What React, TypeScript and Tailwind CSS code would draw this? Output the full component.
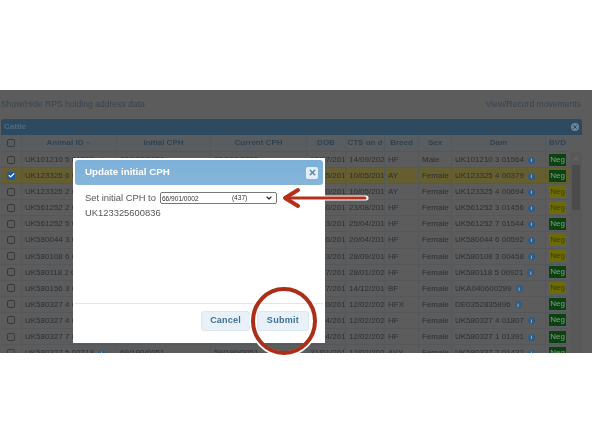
import { Check, ChevronDown, ChevronUp, X } from 'lucide-react';

type Row = {
  id: string;
  initial?: string;
  current?: string;
  dob: string;
  cts: string;
  breed: string;
  sex: string;
  dam: string;
  bvd: 'green' | 'yellow';
  checked?: boolean;
};

const ROWS: Row[] = [
  { id: 'UK101210 5 01562', initial: '60/190/0051', current: '60/190/0051', dob: '15/07/2011', cts: '14/09/2020', breed: 'HF', sex: 'Male', dam: 'UK101210 3 01564', bvd: 'green' },
  { id: 'UK123325 6 00836', dob: '15/05/2011', cts: '10/05/2013', breed: 'AY', sex: 'Female', dam: 'UK123325 4 00379', bvd: 'green', checked: true },
  { id: 'UK123325 2 00837', dob: '20/10/2011', cts: '10/05/2013', breed: 'AY', sex: 'Female', dam: 'UK123325 4 00694', bvd: 'yellow' },
  { id: 'UK561252 2 01772', dob: '10/10/2013', cts: '23/08/2016', breed: 'HF', sex: 'Female', dam: 'UK561252 3 01456', bvd: 'yellow' },
  { id: 'UK561252 5 01775', dob: '15/03/2013', cts: '25/04/2013', breed: 'HF', sex: 'Female', dam: 'UK561252 7 01544', bvd: 'green' },
  { id: 'UK580044 3 00664', dob: '15/06/2014', cts: '20/04/2017', breed: 'HF', sex: 'Female', dam: 'UK580044 6 00592', bvd: 'yellow' },
  { id: 'UK580108 6 00512', dob: '10/03/2014', cts: '28/09/2015', breed: 'HF', sex: 'Female', dam: 'UK580108 3 00458', bvd: 'yellow' },
  { id: 'UK580118 2 00992', dob: '10/07/2016', cts: '28/01/2020', breed: 'HF', sex: 'Female', dam: 'UK580118 5 00921', bvd: 'green' },
  { id: 'UK580156 3 00412', dob: '10/07/2016', cts: '14/12/2018', breed: 'BF', sex: 'Female', dam: 'UKA040600299', bvd: 'yellow' },
  { id: 'UK580327 4 02701', dob: '10/10/2015', cts: '12/02/2020', breed: 'HFX', sex: 'Female', dam: 'DE0352835896', bvd: 'green' },
  { id: 'UK580327 4 02704', dob: '10/04/2017', cts: '12/02/2020', breed: 'HF', sex: 'Female', dam: 'UK580327 4 01807', bvd: 'green' },
  { id: 'UK580327 7 02707', dob: '10/04/2017', cts: '12/02/2020', breed: 'HF', sex: 'Female', dam: 'UK580327 1 01391', bvd: 'green' },
  { id: 'UK580327 5 02718', initial: '69/190/0051', current: '59/190/0051', dob: '31/01/2015', cts: '12/02/2020', breed: 'AYY', sex: 'Female', dam: 'UK580337 7 01432', bvd: 'green' },
];

const COLS = 'grid grid-cols-[21px_95px_94px_96px_39px_39px_34px_33px_94px_23px]';
const CELL = 'overflow-hidden whitespace-nowrap border-r border-[#52585c] pl-[3px] leading-[15px]';

function Info() {
  return (
    <span className="ml-[4px] inline-flex h-[7px] w-[7px] items-center justify-center rounded-full bg-[#2d5c88] align-[0px] text-[6px] leading-none font-bold text-[#a9b9c6]">
      i
    </span>
  );
}

function Box({ checked }: { checked?: boolean }) {
  if (checked) {
    return (
      <div className="flex h-[8px] w-[8px] items-center justify-center rounded-[2px] bg-[#1f5a9e]">
        <Check size={7} strokeWidth={4} className="text-white" />
      </div>
    );
  }
  return <div className="h-[8px] w-[8px] rounded-[2px] border border-[#3a3a3a]" />;
}

function TableRow({ row }: { row: Row }) {
  const rowBg = row.checked ? 'bg-[#645e30]' : 'bg-[#5c5c5c]';
  return (
    <div className={`${COLS} h-[16.1px] border-b border-[#52585c] text-[8px] text-[#2b3035] ${rowBg}`}>
      <div className="flex items-center justify-center border-r border-[#52585c]">
        <Box checked={row.checked} />
      </div>
      <div className={CELL}>
        {row.id}
        <Info />
      </div>
      <div className={CELL}>{row.initial}</div>
      <div className={CELL}>{row.current}</div>
      <div className={CELL}>{row.dob}</div>
      <div className={CELL}>{row.cts}</div>
      <div className={CELL}>{row.breed}</div>
      <div className={CELL}>{row.sex}</div>
      <div className={CELL}>
        {row.dam}
        <Info />
      </div>
      <div className="flex items-center justify-center">
        <span
          className={`h-[12px] w-[17px] text-center text-[8px] leading-[12px] ${
            row.bvd === 'green' ? 'bg-[#0a4212] text-[#86a086]' : 'bg-[#6c6b08] text-[#3c3c0a]'
          }`}
        >
          Neg
        </span>
      </div>
    </div>
  );
}

function Dialog() {
  return (
    <div className="absolute left-[73px] top-[68px] flex h-[185px] w-[252px] flex-col bg-white px-[2px] pt-[2px]">
      <div className="flex h-[25px] items-center justify-between rounded-[3px] bg-gradient-to-b from-[#7db1da] to-[#86b5d9] pl-[10px] pr-[5px]">
        <span className="text-[9.8px] font-bold text-white">Update initial CPH</span>
        <div className="flex h-[12px] w-[12px] items-center justify-center rounded-[2px] bg-[#e4eef6]">
          <X size={9} strokeWidth={4} className="text-[#5d87a8]" />
        </div>
      </div>
      <div className="flex-1 pl-[10px] pt-[6px] text-[9.4px] leading-[14px] text-[#555555]">
        <div className="flex items-center gap-[4px]">
          <span>Set initial CPH to</span>
          <div className="flex h-[12px] w-[117px] items-center rounded-[2px] border border-[#777777] pl-[1px] pr-[3px] text-[6.6px] text-[#333333]">
            <span className="w-[70px] pt-[1px]">66/901/0002</span>
            <span className="flex-1">(437)</span>
            <ChevronDown size={8} strokeWidth={3.5} className="text-[#222222]" />
          </div>
        </div>
        <div className="mt-[1px]">UK123325600836</div>
      </div>
      <div className="flex h-[40px] items-start justify-end gap-[7px] border-t-[1.5px] border-[#dfe6ec] pr-[14px] pt-[7px]">
        <div className="flex h-[20px] w-[49px] items-center justify-center rounded-[3px] border border-[#dce7f0] bg-[#e9f1f8] text-[9px] font-bold tracking-[0.2px] text-[#3f6f91]">
          Cancel
        </div>
        <div className="flex h-[20px] w-[52px] items-center justify-center rounded-[3px] border border-[#dce7f0] bg-[#e9f1f8] text-[9px] font-bold tracking-[0.3px] text-[#3f6f91]">
          Submit
        </div>
      </div>
    </div>
  );
}

function Marks() {
  return (
    <svg className="absolute left-0 top-0" width="592" height="444" viewBox="0 0 592 444" fill="none">
      <path d="M366 198H296" stroke="#ffffff" strokeWidth="5" strokeLinecap="round" />
      <path d="M365 198H288" stroke="#b5301a" strokeWidth="3" strokeLinecap="round" />
      <path d="M298 190L285 198L298 206" stroke="#b5301a" strokeWidth="4" strokeLinecap="round" strokeLinejoin="round" />
      <ellipse cx="284" cy="321" rx="32" ry="33" stroke="#ffffff" strokeWidth="5.5" />
      <ellipse cx="284" cy="321" rx="31" ry="32" stroke="#ab2e18" strokeWidth="4" />
    </svg>
  );
}

export default function App() {
  return (
    <div className="relative h-[444px] w-[592px] overflow-hidden bg-white font-['Liberation_Sans',Arial,sans-serif] blur-[0.3px]">
      <div className="h-[90px]" />
      <div className="relative h-[263px] overflow-hidden bg-[#5c5c5c]">
        <div className="flex h-[29px] items-center justify-between px-[1px] text-[8.6px] text-[#3a444c]">
          <span>Show/Hide RPS holding address data</span>
          <span className="pr-[10px]">View/Record movements</span>
        </div>
        <div className="mr-[10px] ml-[1px]">
          <div className="flex h-[16px] items-center justify-between rounded-t-[3px] bg-[#2e4a61] pl-[3px] pr-[3px] text-[8px] font-bold text-[#506a80]">
            <span>Cattle</span>
            <div className="flex h-[8px] w-[8px] items-center justify-center rounded-full bg-[#6f8392]">
              <X size={6} strokeWidth={4} className="text-[#2e4a61]" />
            </div>
          </div>
          <div className="flex">
            <div className="min-w-0 flex-1">
              <div className={`${COLS} h-[17px] border-b border-[#52585c] bg-[#5a5d5f] text-[8px] font-bold text-[#2f4252]`}>
                <div className="flex items-center justify-center border-r border-[#52585c]">
                  <Box />
                </div>
                <div className="flex items-center justify-center gap-[2px] border-r border-[#52585c]">
                  Animal ID
                  <ChevronUp size={6} strokeWidth={3} />
                </div>
                <div className="flex items-center justify-center border-r border-[#52585c]">Initial CPH</div>
                <div className="flex items-center justify-center border-r border-[#52585c]">Current CPH</div>
                <div className="flex items-center justify-center border-r border-[#52585c]">DOB</div>
                <div className="flex items-center justify-center overflow-hidden whitespace-nowrap border-r border-[#52585c]">CTS on d</div>
                <div className="flex items-center justify-center border-r border-[#52585c]">Breed</div>
                <div className="flex items-center justify-center border-r border-[#52585c]">Sex</div>
                <div className="flex items-center justify-center border-r border-[#52585c]">Dam</div>
                <div className="flex items-center justify-center">BVD</div>
              </div>
              {ROWS.map((row) => (
                <TableRow key={row.id} row={row} />
              ))}
            </div>
            <div className="mt-[17px] flex w-[12px] flex-col items-center bg-[#585858]">
              <ChevronUp size={7} strokeWidth={3} className="mt-[3px] text-[#767676]" />
              <div className="mt-[3px] h-[45px] w-[8px] bg-[#4b4b4b]" />
            </div>
          </div>
        </div>
        <Dialog />
      </div>
      <Marks />
    </div>
  );
}
